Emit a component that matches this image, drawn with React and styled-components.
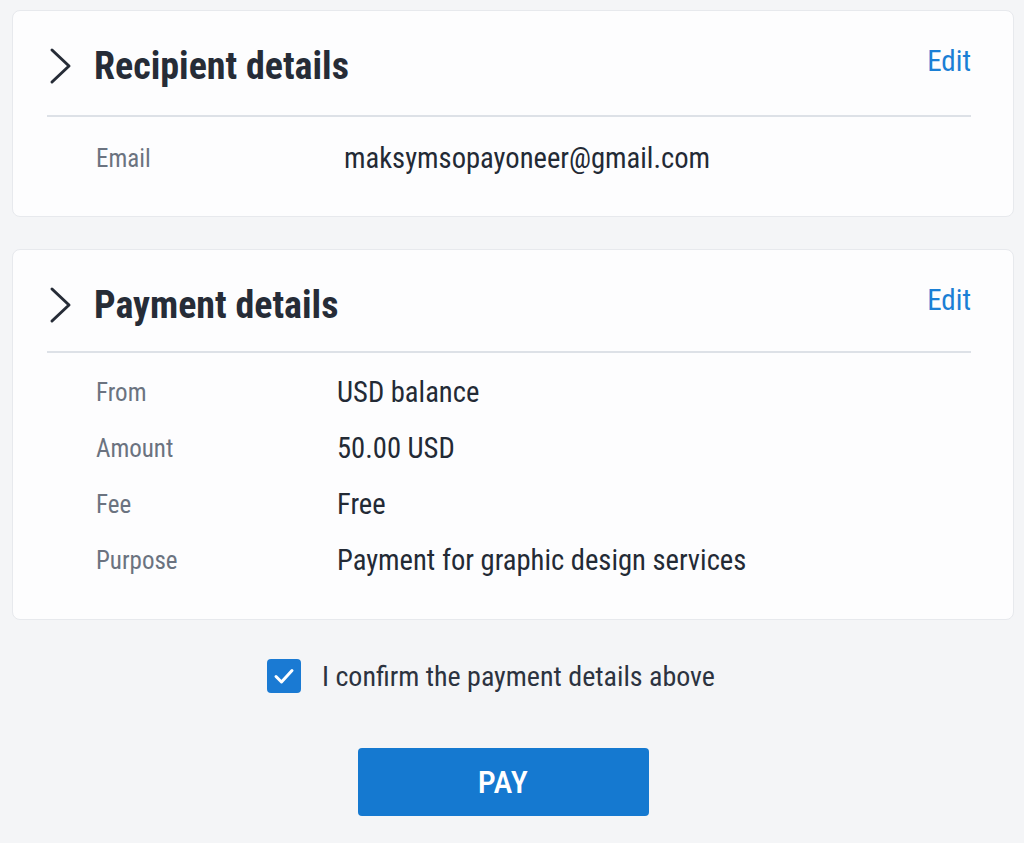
import React from "react";
import styled, { createGlobalStyle } from "styled-components";

const GlobalStyle = createGlobalStyle`
  html, body {
    margin: 0;
    padding: 0;
    background: #f4f5f7;
  }
  body {
    font-family: "Roboto Condensed", Roboto, "Liberation Sans", sans-serif;
    -webkit-font-smoothing: antialiased;
  }
`;

const Page = styled.div`
  width: 1024px;
  min-height: 843px;
  box-sizing: border-box;
  padding: 10px 10px 0 12px;
  display: flex;
  flex-direction: column;
  gap: 32px;
`;

const Card = styled.section`
  background: #fdfdfe;
  border: 1px solid #e7e9ed;
  border-radius: 8px;
  box-sizing: border-box;
  padding: 0 42px ${(p) => p.$bottom}px 34px;
`;

const Header = styled.div`
  display: flex;
  align-items: flex-start;
  justify-content: space-between;
  height: ${(p) => p.$height}px;
  border-bottom: 2px solid #dde1e7;
  box-sizing: border-box;
`;

const TitleGroup = styled.div`
  display: flex;
  align-items: center;
  gap: 21px;
  padding-top: 33px;
`;

const Chevron = styled.svg`
  width: 26px;
  height: 38px;
  flex: none;
`;

const Title = styled.h2`
  margin: 0;
  font-family: "Roboto Condensed", Roboto, sans-serif;
  font-weight: 700;
  font-size: 38px;
  line-height: 44px;
  color: #262c37;
`;

const EditLink = styled.a`
  font-family: "Roboto Condensed", Roboto, sans-serif;
  font-size: 29px;
  line-height: 34px;
  color: #1a7fd5;
  text-decoration: none;
  padding-top: 33px;
  cursor: pointer;
`;

const Rows = styled.div`
  padding-top: ${(p) => p.$top}px;
`;

const Row = styled.div`
  display: grid;
  grid-template-columns: ${(p) => p.$labelWidth}px 1fr;
  align-items: center;
  height: 56px;
  padding-left: 49px;
`;

const Label = styled.span`
  font-family: "Roboto Condensed", Roboto, sans-serif;
  font-size: 25px;
  color: #6b7380;
`;

const Value = styled.span`
  font-family: "Roboto Condensed", Roboto, sans-serif;
  font-size: 28.6px;
  color: #232a35;
`;

const ConfirmRow = styled.label`
  display: flex;
  align-items: center;
  justify-content: center;
  gap: 21px;
  margin-top: 7px;
  padding-right: 44px;
  cursor: pointer;
`;

const CheckBox = styled.span`
  width: 34px;
  height: 34px;
  border-radius: 4px;
  background: #1a7ad3;
  display: flex;
  align-items: center;
  justify-content: center;
  flex: none;
`;

const ConfirmText = styled.span`
  font-family: "Roboto Condensed", Roboto, sans-serif;
  font-size: 28px;
  color: #2c3340;
`;

const ButtonWrap = styled.div`
  display: flex;
  justify-content: center;
  padding-right: 20px;
  margin-top: 55px;
`;

const PayButton = styled.button`
  width: 291px;
  height: 68px;
  border: none;
  border-radius: 4px;
  background: #1579d0;
  color: #ffffff;
  font-family: "Roboto Condensed", Roboto, sans-serif;
  font-weight: 500;
  font-size: 32px;
  letter-spacing: 0.3px;
  cursor: pointer;
`;

const ChevronIcon = () => (
  <Chevron viewBox="0 0 26 38" aria-hidden="true">
    <polyline
      points="5,3 22,19 5,35"
      fill="none"
      stroke="#262c37"
      strokeWidth="3"
      strokeLinecap="round"
      strokeLinejoin="round"
    />
  </Chevron>
);

const Section = ({ title, rows, labelWidth, headerHeight, rowsTop, bottom }) => (
  <Card $bottom={bottom}>
    <Header $height={headerHeight}>
      <TitleGroup>
        <ChevronIcon />
        <Title>{title}</Title>
      </TitleGroup>
      <EditLink>Edit</EditLink>
    </Header>
    <Rows $top={rowsTop}>
      {rows.map(([label, value]) => (
        <Row key={label} $labelWidth={labelWidth}>
          <Label>{label}</Label>
          <Value>{value}</Value>
        </Row>
      ))}
    </Rows>
  </Card>
);

export default function App() {
  return (
    <>
      <GlobalStyle />
      <Page>
        <Section
          title="Recipient details"
          labelWidth={248}
          headerHeight={106}
          rowsTop={13}
          bottom={30}
          rows={[["Email", "maksymsopayoneer@gmail.com"]]}
        />
        <Section
          title="Payment details"
          labelWidth={241}
          headerHeight={103}
          rowsTop={11}
          bottom={31}
          rows={[
            ["From", "USD balance"],
            ["Amount", "50.00 USD"],
            ["Fee", "Free"],
            ["Purpose", "Payment for graphic design services"],
          ]}
        />
        <div>
          <ConfirmRow>
            <CheckBox>
              <svg width="24" height="24" viewBox="0 0 24 24" aria-hidden="true">
                <polyline
                  points="4,12.5 9.5,18 20,6.5"
                  fill="none"
                  stroke="#ffffff"
                  strokeWidth="3"
                  strokeLinecap="round"
                  strokeLinejoin="round"
                />
              </svg>
            </CheckBox>
            <ConfirmText>I confirm the payment details above</ConfirmText>
          </ConfirmRow>
          <ButtonWrap>
            <PayButton>PAY</PayButton>
          </ButtonWrap>
        </div>
      </Page>
    </>
  );
}
